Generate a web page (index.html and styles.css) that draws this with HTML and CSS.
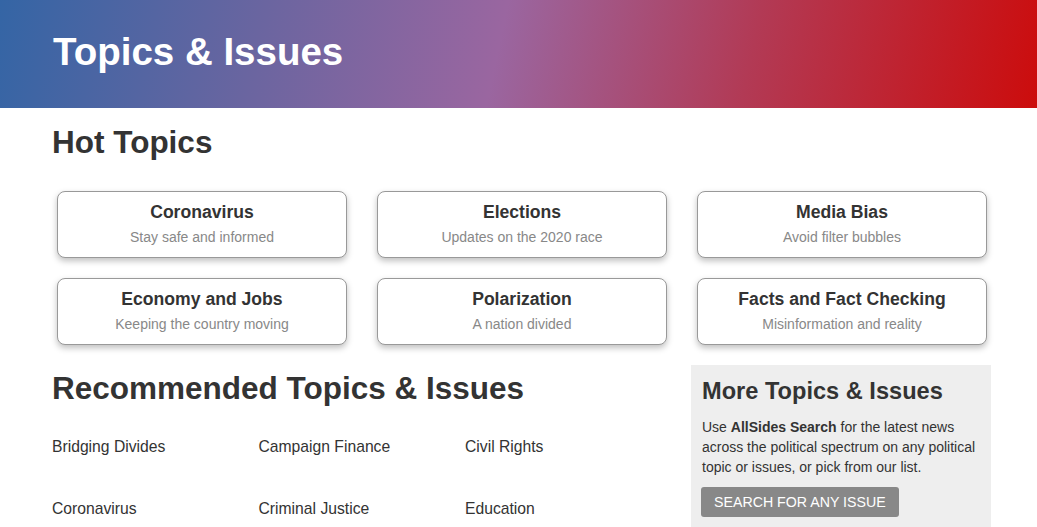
FILE: index.html
```html
<!DOCTYPE html>
<html>
<head>
<meta charset="utf-8">
<link rel="stylesheet" href="styles.css">
</head>
<body>
<header class="banner">
  <div class="container">
    <h1 class="banner-title">Topics &amp; Issues</h1>
  </div>
</header>
<main class="container">
  <h2 class="section-title">Hot Topics</h2>
  <div class="hot-grid">
    <a class="hot-card"><span class="hot-name">Coronavirus</span><span class="hot-sub">Stay safe and informed</span></a>
    <a class="hot-card"><span class="hot-name">Elections</span><span class="hot-sub">Updates on the 2020 race</span></a>
    <a class="hot-card"><span class="hot-name">Media Bias</span><span class="hot-sub">Avoid filter bubbles</span></a>
    <a class="hot-card"><span class="hot-name">Economy and Jobs</span><span class="hot-sub">Keeping the country moving</span></a>
    <a class="hot-card"><span class="hot-name">Polarization</span><span class="hot-sub">A nation divided</span></a>
    <a class="hot-card"><span class="hot-name">Facts and Fact Checking</span><span class="hot-sub">Misinformation and reality</span></a>
  </div>
  <div class="lower">
    <section class="recommended">
      <h2 class="section-title rec-title">Recommended Topics &amp; Issues</h2>
      <ul class="rec-list">
        <li>Bridging Divides</li>
        <li>Campaign Finance</li>
        <li>Civil Rights</li>
        <li>Coronavirus</li>
        <li>Criminal Justice</li>
        <li>Education</li>
      </ul>
    </section>
    <aside class="more">
      <h3 class="more-title">More Topics &amp; Issues</h3>
      <p class="more-text">Use <b>AllSides Search</b> for the latest news across the political spectrum on any political topic or issues, or pick from our list.</p>
      <a class="more-btn">SEARCH FOR ANY ISSUE</a>
    </aside>
  </div>
</main>
</body>
</html>
```
FILE: styles.css
```css
* { box-sizing: border-box; }
html, body { margin: 0; padding: 0; }
body {
  font-family: "Liberation Sans", Arial, sans-serif;
  color: #333;
  background: #fff;
  overflow: hidden;
}
.container {
  width: 940px;
  margin-left: 52px;
}
.banner {
  height: 108px;
  background: linear-gradient(102deg, #3465a5 0%, #6a65a0 25%, #9a66a0 48%, #b23a55 72%, #cc0c0c 100%);
  display: flex;
  align-items: center;
}
.banner-title {
  margin: 0;
  color: #fff;
  font-size: 38.5px;
  font-weight: bold;
  line-height: 1;
  padding-left: 1px;
  padding-bottom: 4px;
}
.section-title {
  margin: 0;
  font-size: 31.5px;
  font-weight: bold;
  line-height: 36px;
  color: #333;
}
main { padding-top: 16px; }
.hot-grid {
  display: grid;
  grid-template-columns: repeat(3, 290px);
  column-gap: 30px;
  row-gap: 20px;
  padding-left: 5px;
  margin-top: 31px;
}
.hot-card {
  height: 67px;
  border: 1px solid #999;
  border-radius: 8px;
  box-shadow: 0 3px 6px rgba(0,0,0,0.25);
  display: flex;
  flex-direction: column;
  align-items: center;
  padding-top: 9px;
  background: #fff;
}
.hot-name {
  font-size: 17.6px;
  font-weight: bold;
  line-height: 22px;
  color: #333;
}
.hot-sub {
  font-size: 14px;
  line-height: 18px;
  margin-top: 5px;
  color: #888;
}
.lower {
  display: grid;
  grid-template-columns: 639px 300px;
  margin-top: 20px;
}
.rec-title { margin-top: 5px; }
.rec-list {
  list-style: none;
  margin: 32px 0 0 0;
  padding: 0;
  display: grid;
  grid-template-columns: repeat(3, 206.5px);
  row-gap: 44px;
}
.rec-list li {
  font-size: 15.7px;
  line-height: 18px;
  color: #333;
}
.more {
  background: #eee;
  padding: 11px 11px 20px 11px;
  height: 200px;
}
.more-title {
  margin: 0;
  font-size: 23.6px;
  font-weight: bold;
  line-height: 30px;
  color: #333;
}
.more-text {
  margin: 11px 0 0 0;
  font-size: 14px;
  line-height: 20px;
  color: #333;
}
.more-btn {
  display: inline-block;
  margin-top: 10px;
  background: #888;
  color: #fff;
  font-size: 14.2px;
  line-height: 30px;
  height: 30px;
  padding: 0 13px;
  border-radius: 3px;
  margin-left: -1px;
}
```
